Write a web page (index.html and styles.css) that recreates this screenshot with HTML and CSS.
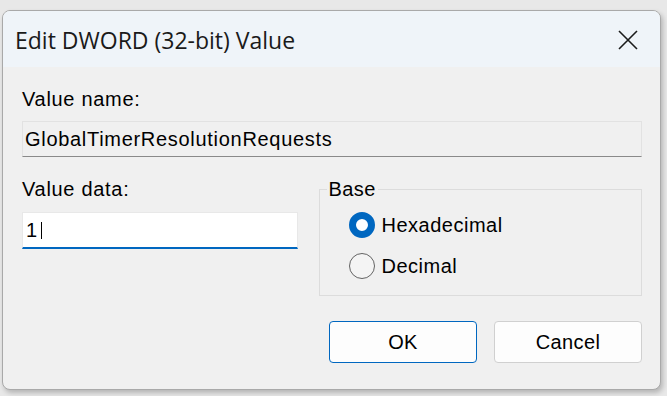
FILE: index.html
```html
<!DOCTYPE html>
<html>
<head>
<meta charset="utf-8">
<link rel="stylesheet" href="styles.css">
</head>
<body>
<div class="dialog">
  <div class="titlebar">
    <span class="title">Edit DWORD (32-bit) Value</span>
    <svg class="close" width="20" height="20" viewBox="0 0 20 20">
      <path d="M1 1 L19 19 M19 1 L1 19" stroke="#1b1b1b" stroke-width="1.6" fill="none"/>
    </svg>
  </div>
  <div class="body">
    <div class="label">Value name:</div>
    <div class="namebox">GlobalTimerResolutionRequests</div>
    <div class="datarow">
      <div class="datacol">
        <div class="label">Value data:</div>
        <div class="input"><span class="val">1</span><span class="caret"></span></div>
      </div>
      <fieldset class="base">
        <legend>Base</legend>
        <div class="radios">
          <div class="radio"><span class="dot checked"></span><span class="rtext">Hexadecimal</span></div>
          <div class="radio"><span class="dot"></span><span class="rtext">Decimal</span></div>
        </div>
      </fieldset>
    </div>
    <div class="buttons">
      <div class="btn primary">OK</div>
      <div class="btn">Cancel</div>
    </div>
  </div>
</div>
</body>
</html>
```
FILE: styles.css
```css
html, body {
  margin: 0;
  padding: 0;
}
body {
  width: 667px;
  height: 396px;
  background: #e8e8e8;
  font-family: "Liberation Sans", Arial, sans-serif;
  font-size: 20px;
  color: #000;
  overflow: hidden;
}
.dialog {
  margin: 10px 0 0 2px;
  width: 659px;
  height: 380px;
  box-sizing: border-box;
  border: 1px solid #a9a9a9;
  border-radius: 8px;
  background: #f0f0f0;
  overflow: hidden;
  box-shadow: 2px 3px 5px rgba(0, 0, 0, 0.22);
  display: flex;
  flex-direction: column;
}
.titlebar {
  height: 56px;
  flex: none;
  background: #eff4f9;
  display: flex;
  align-items: center;
  padding: 0 22px 0 12px;
}
.title {
  flex: 1;
  font-family: "Open Sans", "Noto Sans", sans-serif;
  font-size: 23px;
  color: #1a1a1a;
  line-height: 26px;
  margin-top: 1px;
}
.close {
  display: block;
  margin-top: 1px;
}
.body {
  padding: 20px 18px 0 19px;
  display: flex;
  flex-direction: column;
}
.label {
  line-height: 24px;
  height: 24px;
  letter-spacing: 0.7px;
}
.namebox {
  margin-top: 10px;
  height: 36px;
  box-sizing: border-box;
  border: 1px solid #e2e2e2;
  border-bottom: 1px solid #8a8a8a;
  background: #f0f0f0;
  padding: 0 0 0 2px;
  line-height: 34px;
  letter-spacing: 0.7px;
}
.datarow {
  margin-top: 20px;
  display: flex;
  align-items: flex-start;
}
.datacol {
  width: 276px;
  display: flex;
  flex-direction: column;
}
.input {
  margin-top: 11px;
  height: 37px;
  box-sizing: border-box;
  background: #fff;
  border: 1px solid #e8e8e8;
  border-bottom: 2px solid #0067c0;
  display: flex;
  align-items: center;
  padding-left: 3px;
}
.val {
  line-height: 24px;
}
.caret {
  width: 1px;
  height: 17px;
  background: #000;
  margin-left: 4px;
  margin-top: 1px;
}
.base {
  margin: 0 0 0 21px;
  width: 324px;
  height: 119px;
  box-sizing: border-box;
  border: 1px solid #dcdcdc;
  padding: 0;
  min-width: 0;
}
.base legend {
  padding: 0 2px;
  margin-left: 7px;
  line-height: 24px;
  letter-spacing: 0.4px;
}
.radios {
  padding: 3px 0 0 29px;
  display: flex;
  flex-direction: column;
}
.radio {
  height: 41px;
  display: flex;
  align-items: center;
}
.dot {
  width: 26px;
  height: 26px;
  box-sizing: border-box;
  border-radius: 50%;
  border: 1.5px solid #636363;
  background: #f4f4f4;
  margin-right: 7px;
  flex: none;
}
.dot.checked {
  border: 7px solid #0067c0;
  background: #fff;
}
.rtext {
  line-height: 24px;
  letter-spacing: 0.5px;
}
.buttons {
  margin-top: 25px;
  display: flex;
  justify-content: flex-end;
  gap: 17px;
}
.btn {
  width: 148px;
  height: 42px;
  box-sizing: border-box;
  background: #fdfdfd;
  border: 1px solid #d0d0d0;
  border-radius: 4px;
  display: flex;
  align-items: center;
  justify-content: center;
  line-height: 24px;
  letter-spacing: 0.4px;
}
.btn.primary {
  border-color: #0067c0;
}
```
